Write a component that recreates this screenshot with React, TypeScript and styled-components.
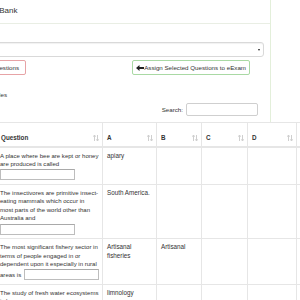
import styled, { createGlobalStyle } from "styled-components";

const GlobalStyle = createGlobalStyle`
  html, body {
    margin: 0;
    padding: 0;
    background: #ffffff;
    overflow: hidden;
  }
  body {
    font-family: "Liberation Sans", Arial, sans-serif;
    color: #333333;
  }
`;

interface Question {
  text: string[];
  tail?: string;
  blank: boolean;
  a: string[];
  b: string[];
}

const questions: Question[] = [
  {
    text: ["A place where bee are kept or honey", "are produced is called"],
    blank: true,
    a: ["apiary"],
    b: [],
  },
  {
    text: [
      "The insectivores are primitive insect-",
      "eating mammals which occur in",
      "most parts of the world other than",
      "Australia and",
    ],
    blank: true,
    a: ["South America."],
    b: [],
  },
  {
    text: [
      "The most significant fishery sector in",
      "terms of people engaged in or",
      "dependent upon it especially in rural",
    ],
    tail: "areas is",
    blank: true,
    a: ["Artisanal", "fisheries"],
    b: ["Artisanal"],
  },
  {
    text: ["The study of fresh water ecosystems", "is known as"],
    blank: false,
    a: ["limnology"],
    b: [],
  },
];

const Page = styled.div`
  margin-left: -60px;
  width: 600px;
`;

const Panel = styled.div`
  width: 329px;
  margin-top: -1px;
  border: 1px solid #e3efda;
  background: #ffffff;
`;

const PanelHeading = styled.div`
  padding: 6px 0 7px 24px;
  border-bottom: 1px solid #e9eee4;
  font-size: 8px;
  line-height: 10px;
  color: #333333;
`;

const PanelBody = styled.div`
  padding: 18px 6px 0 6px;
`;

const SelectBox = styled.div`
  position: relative;
  height: 13px;
  border: 1px solid #d9d9d9;
  border-radius: 3px;
  box-shadow: inset 0 1px 1px rgba(0, 0, 0, 0.06);
  background: #ffffff;

  &::after {
    content: "";
    position: absolute;
    right: 3px;
    top: 6px;
    border-left: 1.5px solid transparent;
    border-right: 1.5px solid transparent;
    border-top: 2.5px solid #222222;
  }
`;

const ButtonRow = styled.div`
  display: flex;
  align-items: center;
  margin-top: 3px;
  height: 15px;
`;

const Button = styled.button<{ $tone: "red" | "green" }>`
  height: 15px;
  box-sizing: border-box;
  padding: 0 4px;
  display: flex;
  align-items: center;
  gap: 0;
  font-family: "Liberation Sans", Arial, sans-serif;
  font-size: 6.2px;
  color: #333333;
  white-space: nowrap;
  background: #ffffff;
  border-radius: 2px;
  border: 1px solid ${(p) => (p.$tone === "red" ? "#e7a3a6" : "#a9d9a4")};
`;

const DeleteButton = styled(Button)`
  width: 79px;
  justify-content: flex-end;
  padding-right: 6px;
`;

const AssignButton = styled(Button)`
  margin-left: auto;
  margin-right: 14px;
  padding: 0 3px 0 3px;
`;

const InfoLine = styled.div`
  width: 60px;
  margin-top: 15px;
  font-size: 6.2px;
  line-height: 9px;
  text-align: right;
  white-space: nowrap;
`;

const SearchRow = styled.div`
  display: flex;
  justify-content: flex-end;
  align-items: center;
  gap: 3px;
  margin-top: 4px;
  margin-right: 6px;
  font-size: 6.2px;
`;

const SearchInput = styled.div`
  width: 70px;
  height: 11px;
  border: 1px solid #cfcfcf;
  border-radius: 2px;
`;

const Table = styled.table`
  margin-top: 6px;
  border-collapse: collapse;
  table-layout: fixed;
  width: 419px;
  background: #ffffff;
  font-size: 6.3px;
  line-height: 8.6px;
  color: #333333;
`;

const HeadCell = styled.th<{ $w: number }>`
  box-sizing: border-box;
  width: ${(p) => p.$w}px;
  height: 24px;
  padding: 4px 3px 3px 4px;
  text-align: left;
  vertical-align: bottom;
  font-weight: bold;
  border: 1px solid #e6e6e6;
  border-bottom-width: 2px;
`;

const HeadInner = styled.div`
  display: flex;
  align-items: center;
  justify-content: space-between;
`;

const Cell = styled.td`
  box-sizing: border-box;
  padding: 4px 4px 3px 4px;
  vertical-align: top;
  border: 1px solid #e6e6e6;
  border-top: none;
  white-space: nowrap;
  overflow: hidden;
`;

const QuestionCell = styled(Cell)`
  padding: 4px 2px 3px 3px;
  font-size: 6.05px;
  line-height: 8.6px;
`;

const BlankLine = styled.div`
  display: flex;
  align-items: center;
  gap: 3px;
  height: 12px;
`;

const BlankInput = styled.span`
  display: block;
  width: 73px;
  height: 9px;
  border: 1px solid #bdbdbd;
  border-top-color: #a9a9a9;
`;

const SortIcon = () => (
  <svg width="6" height="8" viewBox="0 0 6 8">
    <path d="M1.5 7V1.5M0.3 2.7L1.5 1L2.7 2.7" stroke="#c9c9c9" strokeWidth="0.9" fill="none" />
    <path d="M4.5 1V6.5M3.3 5.3L4.5 7L5.7 5.3" stroke="#c9c9c9" strokeWidth="0.9" fill="none" />
  </svg>
);

const ArrowIcon = () => (
  <svg width="8" height="6" viewBox="0 0 8 6">
    <path d="M0 3L3.5 0V2H8V4H3.5V6Z" fill="#222222" />
  </svg>
);

const columns = [
  { label: "", w: 20, sort: false },
  { label: "#", w: 29, sort: true },
  { label: "Question", w: 106, sort: true },
  { label: "A", w: 54, sort: true },
  { label: "B", w: 45, sort: true },
  { label: "C", w: 46, sort: true },
  { label: "D", w: 49, sort: true },
  { label: "E", w: 70, sort: true },
];

export default function App() {
  return (
    <Page>
      <GlobalStyle />
      <Panel>
        <PanelHeading>Question Bank</PanelHeading>
        <PanelBody>
          <SelectBox />
          <ButtonRow>
            <DeleteButton $tone="red">Delete Questions</DeleteButton>
            <AssignButton $tone="green">
              <ArrowIcon />
              Assign Selected Questions to eExam
            </AssignButton>
          </ButtonRow>
          <InfoLine>Show Tables</InfoLine>
          <SearchRow>
            <span>Search:</span>
            <SearchInput />
          </SearchRow>
          <Table>
            <thead>
              <tr>
                {columns.map((c, i) => (
                  <HeadCell key={i} $w={c.w}>
                    <HeadInner>
                      <span>{c.label}</span>
                      {c.sort ? <SortIcon /> : null}
                    </HeadInner>
                  </HeadCell>
                ))}
              </tr>
            </thead>
            <tbody>
              {questions.map((q, i) => (
                <tr key={i}>
                  <Cell />
                  <Cell>{i + 1}</Cell>
                  <QuestionCell>
                    {q.text.map((line, j) => (
                      <div key={j}>{line}</div>
                    ))}
                    {q.blank ? (
                      <BlankLine>
                        {q.tail ? <span>{q.tail}</span> : null}
                        <BlankInput />
                      </BlankLine>
                    ) : null}
                  </QuestionCell>
                  <Cell>
                    {q.a.map((line, j) => (
                      <div key={j}>{line}</div>
                    ))}
                  </Cell>
                  <Cell>
                    {q.b.map((line, j) => (
                      <div key={j}>{line}</div>
                    ))}
                  </Cell>
                  <Cell />
                  <Cell />
                  <Cell />
                </tr>
              ))}
            </tbody>
          </Table>
        </PanelBody>
      </Panel>
    </Page>
  );
}
